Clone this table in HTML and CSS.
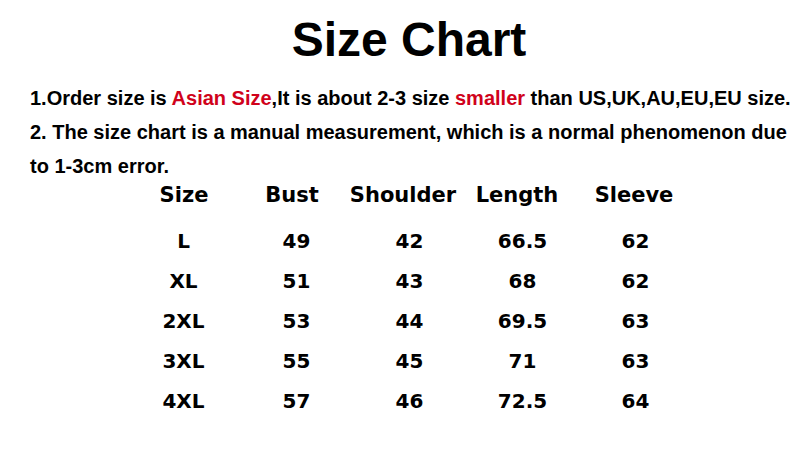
FILE: index.html
```html
<!DOCTYPE html>
<html>
<head>
<meta charset="utf-8">
<link rel="stylesheet" href="styles.css">
</head>
<body>
<div class="page">
  <h1 class="title">Size Chart</h1>
  <div class="notes">
    <p class="note">1.Order size is <span class="red">Asian Size</span>,It is about 2-3 size <span class="red">smaller</span> than US,UK,AU,EU,EU size.</p>
    <p class="note">2. The size chart is a manual measurement, which is a normal phenomenon due</p>
    <p class="note">to 1-3cm error.</p>
  </div>
  <div class="chart">
    <div class="hrow">
      <span>Size</span><span>Bust</span><span>Shoulder</span><span>Length</span><span>Sleeve</span>
    </div>
    <div class="drow"><span>L</span><span>49</span><span>42</span><span>66.5</span><span>62</span></div>
    <div class="drow"><span>XL</span><span>51</span><span>43</span><span>68</span><span>62</span></div>
    <div class="drow"><span>2XL</span><span>53</span><span>44</span><span>69.5</span><span>63</span></div>
    <div class="drow"><span>3XL</span><span>55</span><span>45</span><span>71</span><span>63</span></div>
    <div class="drow"><span>4XL</span><span>57</span><span>46</span><span>72.5</span><span>64</span></div>
  </div>
</div>
</body>
</html>
```
FILE: styles.css
```css
html, body {
  margin: 0;
  padding: 0;
  background: #fff;
}
.page {
  width: 800px;
  height: 450px;
  overflow: hidden;
  color: #000;
}
.title {
  margin: 0;
  padding-top: 12px;
  padding-left: 18px;
  height: 56px;
  text-align: center;
  font-family: "Liberation Sans", Arial, sans-serif;
  font-weight: bold;
  font-size: 48px;
  line-height: 56px;
}
.notes {
  padding-left: 30px;
  margin-top: 13px;
}
.note {
  margin: 0;
  height: 34px;
  line-height: 34px;
  font-family: "Liberation Sans", Arial, sans-serif;
  font-weight: bold;
  font-size: 20px;
  white-space: nowrap;
}
.red {
  color: #d0021b;
}
.chart {
  margin-top: -2px;
}
.hrow {
  display: grid;
  grid-template-columns: 108px 108px 114px 114px 120px;
  margin-left: 130px;
  text-align: center;
  height: 28px;
  line-height: 28px;
  font-family: "DejaVu Sans", Verdana, sans-serif;
  font-weight: bold;
  font-size: 21px;
}
.drow {
  display: grid;
  grid-template-columns: repeat(5, 113px);
  margin-left: 127px;
  text-align: center;
  height: 40px;
  line-height: 40px;
  font-family: "DejaVu Sans", Verdana, sans-serif;
  font-weight: bold;
  font-size: 20px;
}
.hrow + .drow {
  margin-top: 12px;
}
```
